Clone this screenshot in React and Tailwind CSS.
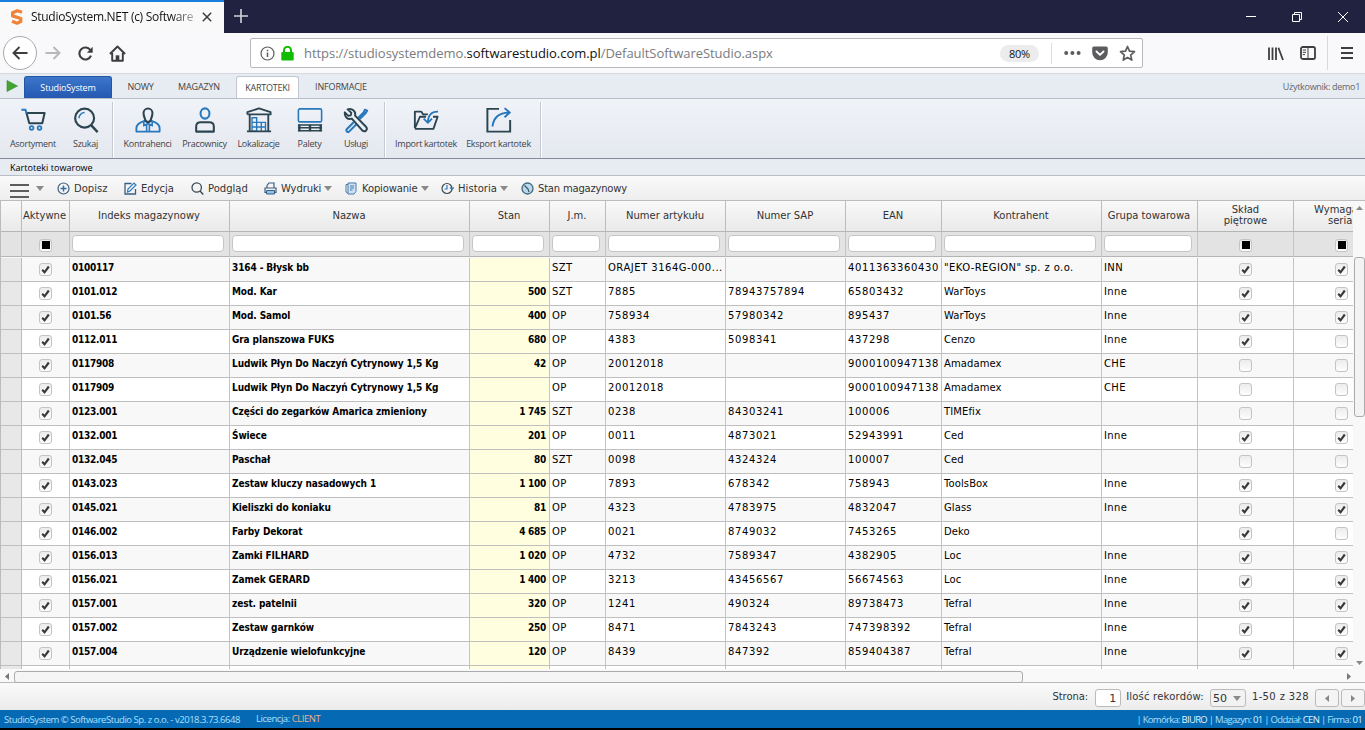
import React from 'react'
import clsx from 'clsx'

const COLUMNS = [
  { key: 'active', label: 'Aktywne', width: 'w-[48px]', type: 'check' },
  { key: 'index', label: 'Indeks magazynowy', width: 'w-[160px]', input: 'w-[152px]', type: 'bold' },
  { key: 'name', label: 'Nazwa', width: 'w-[240px]', input: 'w-[232px]', type: 'bold' },
  { key: 'stock', label: 'Stan', width: 'w-[80px]', input: 'w-[72px]', type: 'stock' },
  { key: 'unit', label: 'J.m.', width: 'w-[56px]', input: 'w-[48px]' },
  { key: 'article', label: 'Numer artykułu', width: 'w-[120px]', input: 'w-[112px]' },
  { key: 'sap', label: 'Numer SAP', width: 'w-[120px]', input: 'w-[112px]' },
  { key: 'ean', label: 'EAN', width: 'w-[96px]', input: 'w-[88px]' },
  { key: 'contractor', label: 'Kontrahent', width: 'w-[160px]', input: 'w-[152px]' },
  { key: 'group', label: 'Grupa towarowa', width: 'w-[96px]', input: 'w-[88px]' },
  { key: 'stacked', label: 'Skład piętrowe', width: 'w-[96px]', type: 'check' },
  { key: 'serial', label: 'Wymaga seria', width: 'w-[96px]', type: 'check' },
]

const ROWS = [
  ['0100117', '3164 - Błysk bb', '', 'SZT', 'ORAJET 3164G-000...', '', '4011363360430', '"EKO-REGION" sp. z o.o.', 'INN', 1, 1],
  ['0101.012', 'Mod. Kar', '500', 'SZT', '7885', '78943757894', '65803432', 'WarToys', 'Inne', 1, 1],
  ['0101.56', 'Mod. Samol', '400', 'OP', '758934', '57980342', '895437', 'WarToys', 'Inne', 1, 1],
  ['0112.011', 'Gra planszowa FUKS', '680', 'OP', '4383', '5098341', '437298', 'Cenzo', 'Inne', 1, 0],
  ['0117908', 'Ludwik Płyn Do Naczyń Cytrynowy 1,5 Kg', '42', 'OP', '20012018', '', '9000100947138', 'Amadamex', 'CHE', 0, 0],
  ['0117909', 'Ludwik Płyn Do Naczyń Cytrynowy 1,5 Kg', '', 'OP', '20012018', '', '9000100947138', 'Amadamex', 'CHE', 0, 0],
  ['0123.001', 'Części do zegarków Amarica zmieniony', '1 745', 'SZT', '0238', '84303241', '100006', 'TIMEfix', '', 0, 0],
  ['0132.001', 'Świece', '201', 'OP', '0011', '4873021', '52943991', 'Ced', 'Inne', 1, 1],
  ['0132.045', 'Paschał', '80', 'SZT', '0098', '4324324', '100007', 'Ced', '', 0, 0],
  ['0143.023', 'Zestaw kluczy nasadowych 1', '1 100', 'OP', '7893', '678342', '758943', 'ToolsBox', 'Inne', 1, 1],
  ['0145.021', 'Kieliszki do koniaku', '81', 'OP', '4323', '4783975', '4832047', 'Glass', 'Inne', 1, 1],
  ['0146.002', 'Farby Dekorat', '4 685', 'OP', '0021', '8749032', '7453265', 'Deko', '', 1, 0],
  ['0156.013', 'Zamki FILHARD', '1 020', 'OP', '4732', '7589347', '4382905', 'Loc', 'Inne', 1, 1],
  ['0156.021', 'Zamek GERARD', '1 400', 'OP', '3213', '43456567', '56674563', 'Loc', 'Inne', 1, 1],
  ['0157.001', 'zest. patelnii', '320', 'OP', '1241', '490324', '89738473', 'Tefral', 'Inne', 1, 1],
  ['0157.002', 'Zestaw garnków', '250', 'OP', '8471', '7843243', '747398392', 'Tefral', 'Inne', 1, 1],
  ['0157.004', 'Urządzenie wielofunkcyjne', '120', 'OP', '8439', '847392', '859404387', 'Tefral', 'Inne', 1, 1],
].map((r) => [1, ...r])

const DARK = '#2b4450'
const BLUE = '#2878bd'

function Svg({ className, box = '0 0 16 16', children }) {
  return (
    <svg viewBox={box} className={clsx('shrink-0', className)} fill="none">
      {children}
    </svg>
  )
}

function Caret({ className }) {
  return (
    <Svg className={clsx('h-[5px] w-[8px]', className)} box="0 0 8 5">
      <path d="M0 0h8L4 5z" fill="#8a8a8a" />
    </Svg>
  )
}

/* browser chrome */

function TitleBar() {
  return (
    <div className="flex h-[33px] bg-[#20223f] text-white">
      <div className="flex w-[224px] items-center border-t-2 border-[#1a7fdc] bg-[#f9f9fa] pb-[2px] pl-[10px]">
        <Svg className="mr-[7px] h-[16px] w-[14px]" box="0 0 14 16">
          <path d="M12 3.2 7.4 1.7 2.6 3.8v3.1l8.2 2.6v3L7 14.2l-5-1.9" stroke="#f08337" strokeWidth="3.2" strokeLinejoin="round" />
        </Svg>
        <span className="w-[164px] overflow-hidden bg-gradient-to-r from-[#111] from-85% to-[#bbb] bg-clip-text text-[12px] leading-[20px] tracking-[-0.29px] whitespace-nowrap text-transparent">
          StudioSystem.NET (c) Software
        </span>
        <Svg className="ml-[7px] h-[10px] w-[10px]" box="0 0 10 10">
          <path d="m.8.8 8.4 8.4M9.2.8.8 9.2" stroke="#3d3d3f" strokeWidth="1.5" />
        </Svg>
      </div>
      <Svg className="mt-[9px] ml-[10px] h-[14px] w-[14px]" box="0 0 14 14">
        <path d="M7 0v14M0 7h14" stroke="#d4d4dc" strokeWidth="1.6" />
      </Svg>
      <div className="ml-auto flex items-center gap-[36px] pr-[17px]">
        <Svg className="h-[10px] w-[10px]" box="0 0 10 10">
          <path d="M0 4.5h10" stroke="#fff" />
        </Svg>
        <Svg className="h-[10px] w-[10px]" box="0 0 10 10">
          <path d="M.5 2.5h7v7h-7zM2.5 2.5v-2h7v7h-2" stroke="#fff" />
        </Svg>
        <Svg className="h-[10px] w-[10px]" box="0 0 10 10">
          <path d="m0 0 10 10M10 0 0 10" stroke="#fff" />
        </Svg>
      </div>
    </div>
  )
}

function AddressBar() {
  return (
    <div className="flex h-[30px] w-[893px] items-center rounded-[2px] border border-[#b9b9bb] bg-white pl-[9px]">
      <Svg className="h-[15px] w-[15px]" box="0 0 15 15">
        <circle cx="7.5" cy="7.5" r="6.5" stroke="#5e5e60" strokeWidth="1.2" />
        <path d="M7.5 6.5V11M7.5 3.8v1.5" stroke="#5e5e60" strokeWidth="1.5" />
      </Svg>
      <Svg className="mr-[10px] ml-[6px] h-[15px] w-[13px]" box="0 0 13 15">
        <rect x=".3" y="6" width="12.4" height="8.6" rx="1.3" fill="#12bc00" />
        <path d="M3 7V4.3a3.5 3.5 0 0 1 7 0V7" stroke="#12bc00" strokeWidth="2" />
      </Svg>
      <span className="mt-px text-[13px] tracking-[-0.04px] whitespace-nowrap text-[#7b7b7d]">
        https://studiosystemdemo.<span className="text-[#111]">softwarestudio.com.pl</span>/DefaultSoftwareStudio.aspx
      </span>
      <div className="ml-auto flex h-full items-center pr-[6px]">
        <span className="mt-px h-[17px] w-[39px] rounded-full bg-[#ececee] text-center text-[11px] leading-[17px] tracking-[-0.3px] text-[#111]">80%</span>
        <span className="ml-[12px] h-[21px] w-px bg-[#dededf]" />
        <Svg className="ml-[12px] h-[4px] w-[17px]" box="0 0 17 4">
          <circle cx="2.2" cy="2" r="2" fill="#5c5c5f" />
          <circle cx="8.4" cy="2" r="2" fill="#5c5c5f" />
          <circle cx="14.6" cy="2" r="2" fill="#5c5c5f" />
        </Svg>
        <Svg className="ml-[11px] h-[15px] w-[16px]" box="0 0 16 15">
          <path d="M1.8.6h12.4q1.600 0 1.600 1.600V6.500a7.800 7.800 0 0 1-15.600 0V2.200Q.2.6 1.800.6z" fill="#5c5c5f" />
          <path d="m4.5 5.500 3.500 3.400 3.500-3.400" stroke="#fff" strokeWidth="1.9" strokeLinecap="round" strokeLinejoin="round" />
        </Svg>
        <Svg className="ml-[11px] h-[17px] w-[17px]" box="0 0 17 17">
          <path d="m8.5 1.500 2 4.700 5 .5-3.800 3.400 1.100 5-4.300-2.600-4.300 2.600 1.100-5L1.500 6.700l5-.5z" stroke="#5c5c5f" strokeWidth="1.700" strokeLinejoin="round" />
        </Svg>
      </div>
    </div>
  )
}

function NavBar() {
  return (
    <div className="flex h-[41px] items-center border-b border-[#d5d8df] bg-[#f9f9fb] pl-[3px]">
      <div className="flex h-[34px] w-[34px] items-center justify-center rounded-full border border-[#a9a9ab] bg-white">
        <Svg className="h-[14px] w-[16px]" box="0 0 16 14">
          <path d="M15.5 7H1.500M7.500 1l-6 6 6 6" stroke="#3e3e40" strokeWidth="1.9" />
        </Svg>
      </div>
      <Svg className="ml-[8px] h-[14px] w-[16px]" box="0 0 16 14">
        <path d="M.5 7h14M8.500 1l6 6-6 6" stroke="#b8b8ba" strokeWidth="1.9" />
      </Svg>
      <Svg className="ml-[17px] h-[15px] w-[15px]" box="0 0 15 15">
        <path d="M12.5 4.300A6 6 0 1 0 13 9.700" stroke="#3e3e40" strokeWidth="2.1" />
        <path d="M14.7.8v6H8.900z" fill="#3e3e40" />
      </Svg>
      <Svg className="ml-[16px] h-[17px] w-[17px]" box="0 0 17 17">
        <path d="m.9 9 7.600-7.500L16.100 9M3.200 8v7.800h10.600V8" stroke="#3e3e40" strokeWidth="1.9" strokeLinejoin="round" />
        <path d="M6.7 15.500v-5.200h3.600v5.200z" fill="#3e3e40" />
      </Svg>
      <div className="ml-[124px]">
        <AddressBar />
      </div>
      <div className="ml-auto flex items-center pr-[12px]">
        <Svg className="h-[15px] w-[16px]" box="0 0 16 15">
          <path d="M1 1.500V14M4.500 1.500V14M8 1.500V14M10.400 1.800 15 14" stroke="#3e3e40" strokeWidth="1.8" />
        </Svg>
        <Svg className="ml-[16px] h-[14px] w-[16px]" box="0 0 16 14">
          <rect x="1" y="1" width="14" height="12" rx="1.8" stroke="#3e3e40" strokeWidth="1.8" />
          <path d="M8 1v12M2.800 4h3.200M2.800 6.300h3.200M2.800 8.600h2.200" stroke="#3e3e40" />
        </Svg>
        <span className="ml-[11px] h-[34px] w-px bg-[#d8d8da]" />
        <Svg className="ml-[13px] h-[14px] w-[12px]" box="0 0 12 14">
          <path d="M0 2h12M0 7h12M0 12h12" stroke="#3e3e40" strokeWidth="1.8" />
        </Svg>
      </div>
    </div>
  )
}

/* ribbon */

function RibbonTabs() {
  return (
    <div className="flex h-[24px] items-end bg-[#e7ebf2] text-[9px] tracking-[-0.25px] text-[#444]">
      <Svg className="mb-[6px] ml-[6px] h-[12px] w-[12px]" box="0 0 12 12">
        <path d="M1 .5 11.500 6 1 11.500z" fill="#42a52f" stroke="#2f8a2a" strokeWidth=".6" />
      </Svg>
      <div className="ml-[6px] h-[22px] w-[88px] rounded-t-[3px] border border-b-0 border-[#2556a2] bg-gradient-to-b from-[#3d76cb] to-[#2459b2] text-center leading-[22px] tracking-[-0.16px] text-white">
        StudioSystem
      </div>
      <span className="w-[57px] text-center leading-[22px]">NOWY</span>
      <span className="w-[60px] text-center leading-[22px] tracking-[-0.15px]">MAGAZYN</span>
      <div className="ml-[7px] h-[22px] w-[63px] rounded-t-[3px] border border-b-0 border-[#c2c6d0] bg-white text-center leading-[21px]">KARTOTEKI</div>
      <span className="w-[84px] text-center leading-[22px] tracking-[-0.15px]">INFORMACJE</span>
      <span className="mr-[5px] ml-auto leading-[23px] tracking-[-0.3px] text-[#666]">Użytkownik: demo1</span>
    </div>
  )
}

function RibbonButton({ label, width, children }) {
  return (
    <div className={clsx('flex flex-col items-center', width)}>
      <Svg className="mb-[2px] h-[26px] w-[26px]" box="0 0 28 28">
        {children}
      </Svg>
      <span className="mt-[3px] text-[9px] leading-[12px] tracking-[-0.28px] whitespace-nowrap text-[#3f4247]">{label}</span>
    </div>
  )
}

function RibbonDivider({ className }) {
  return <span className={clsx('-mt-[5px] h-[56px] w-[2px] border-l border-[#c6cad3] bg-white', className)} />
}

function Ribbon() {
  return (
    <div className="flex h-[61px] border-t border-b border-t-[#b9bdc8] border-b-[#858b99] bg-gradient-to-b from-[#f0f3f8] to-[#e4e8ef] pt-[8px]">
      <RibbonButton label="Asortyment" width="w-[66px]">
        <path d="M7 6.500h19.500L24 17.500H10z" stroke={DARK} strokeWidth="2.2" strokeLinejoin="round" />
        <path d="M1.500 3h4.300l1.500 4" stroke={BLUE} strokeWidth="2.2" />
        <circle cx="12.5" cy="22.500" r="2" stroke={BLUE} strokeWidth="1.9" />
        <circle cx="21" cy="22.500" r="2" stroke={BLUE} strokeWidth="1.9" />
      </RibbonButton>
      <RibbonButton label="Szukaj" width="w-[39px]">
        <circle cx="12.5" cy="12" r="10.200" stroke={DARK} strokeWidth="2.3" />
        <path d="m19.5 19.500 7 7.500" stroke={DARK} strokeWidth="2.6" />
        <path d="M6.5 12a6 6 0 0 1 6-6" stroke={BLUE} strokeWidth="1.6" />
      </RibbonButton>
      <RibbonDivider className="ml-[7px]" />
      <RibbonButton label="Kontrahenci" width="ml-[3px] w-[61px]">
        <path d="M1.500 26.500v-3.500q0-5.500 9-8l3.500 2 3.500-2q9 2.500 9 8v3.500z" stroke={BLUE} strokeWidth="2" strokeLinejoin="round" />
        <path d="m9.5 14.500v5.500l4.500-2 4.500 2v-5.500M12.500 19v7M15.500 19v7" stroke={BLUE} strokeWidth="1.7" />
        <path d="M9.2 6.500a4.800 4.800 0 0 1 9.600 0c0 4-1.800 6-2 8L14 16.500l-2.800-2c-.2-2-2-4-2-8z" stroke={DARK} strokeWidth="2.2" />
      </RibbonButton>
      <RibbonButton label="Pracownicy" width="w-[53px]">
        <ellipse cx="14" cy="7" rx="4.8" ry="5.500" stroke={BLUE} strokeWidth="2.2" />
        <path d="M4.500 26.500V21q0-4.500 5-4.500h9q5 0 5 4.500v5.500z" stroke={DARK} strokeWidth="2.2" strokeLinejoin="round" />
      </RibbonButton>
      <RibbonButton label="Lokalizacje" width="w-[55px]">
        <path d="M6.500 11.500h5V26h-5zM6.500 16.500h15M6.500 21.500h15M16.500 16.500V26M21 16.500V26" stroke={BLUE} strokeWidth="1.5" />
        <path d="M1.500 8V5.500L14 1.500l12.500 4V8H1.500M4 8v18M24 8v18M1 26.300h26" stroke={DARK} strokeWidth="2" strokeLinejoin="round" />
      </RibbonButton>
      <RibbonButton label="Palety" width="w-[47px]">
        <rect x="1.500" y="2" width="25" height="14" rx="1.500" stroke={BLUE} strokeWidth="1.7" />
        <path d="M1 19.300h26M1 22.300h26M1 25.700h26" stroke={DARK} strokeWidth="1.6" />
        <path d="M2.500 19v7M14 19v7M25.500 19v7" stroke={DARK} strokeWidth="2.5" />
      </RibbonButton>
      <RibbonButton label="Usługi" width="w-[46px]">
        <path d="m16 12 6.500-6.500 1-2.500L26 4l-1.500 2.500L18 13M11.500 16.500 4 24a1.800 1.800 0 0 0 2.500 2.500l8-8" stroke={BLUE} strokeWidth="2.2" strokeLinejoin="round" />
        <path d="M5 2.500 9 6.300 8.300 9l-2.600.5L2 5.800C1.300 10.500 5 14 9.500 12.500L20.500 25c3.200 3 7-1 4-4L13 9.300C14 4.500 9.800.8 5 2.500z" stroke={DARK} strokeWidth="2.1" strokeLinejoin="round" />
      </RibbonButton>
      <RibbonDivider className="ml-[5px]" />
      <RibbonButton label="Import kartotek" width="ml-[3px] w-[74px]">
        <path d="M2 23V5h7l2 3h5M2 23.500h20l4.500-13h-5M2 23l5.500-12.500H14" stroke={DARK} strokeWidth="2" strokeLinejoin="round" />
        <path d="M27 5q-10.500-.5-11 11.500M11.500 12.500l4.500 4.500 4.500-4.500" stroke={BLUE} strokeWidth="2" />
      </RibbonButton>
      <RibbonButton label="Eksport kartotek" width="w-[71px]">
        <path d="M14 2H1.500v24.500H26V14" stroke={DARK} strokeWidth="2.1" />
        <path d="M7 21C8 12 13 6.500 24.500 6M20 1.200l5.500 4.800-5.500 5" stroke={BLUE} strokeWidth="2.1" />
      </RibbonButton>
      <RibbonDivider className="ml-[6px]" />
    </div>
  )
}

/* grid */

function ToolButton({ label, caret, className, children }) {
  return (
    <div className={clsx('flex items-center', className)}>
      <Svg className="h-[13px] w-[13px]" box="0 0 13 13">
        {children}
      </Svg>
      <span className="ml-[4px] whitespace-nowrap">{label}</span>
      {caret && <Caret className="ml-[3px]" />}
    </div>
  )
}

function Toolbar() {
  return (
    <div className="flex h-[24px] items-center bg-gradient-to-b from-[#fafafa] to-[#eeeeee] pl-[10px] font-['DejaVu_Sans'] text-[10px] text-[#333]">
      <Svg className="mt-[6px] h-[14px] w-[19px]" box="0 0 19 14">
        <path d="M0 1h19M0 7h19M0 13h19" stroke="#5c5c5c" strokeWidth="2" />
      </Svg>
      <Caret className="ml-[7px]" />
      <ToolButton label="Dopisz" className="ml-[13px] w-[67px]">
        <circle cx="6.5" cy="6.500" r="5.500" stroke="#3b5f80" strokeWidth="1.2" />
        <path d="M6.5 3.500v6M3.500 6.500h6" stroke="#2e6da4" strokeWidth="1.4" />
      </ToolButton>
      <ToolButton label="Edycja" className="w-[67px]">
        <path d="M7.5 1.500H1v10.500h10.500V7" stroke="#3b5f80" strokeWidth="1.3" />
        <path d="m3.5 10 .5-3L10 1l2 2-6 6z" stroke="#2e7bbd" strokeWidth="1.2" />
      </ToolButton>
      <ToolButton label="Podgląd" className="w-[73px]">
        <circle cx="5.7" cy="5.500" r="4.700" stroke="#3a4b58" strokeWidth="1.3" />
        <path d="m9 9 3.300 3.500" stroke="#3a4b58" strokeWidth="1.5" />
      </ToolButton>
      <ToolButton label="Wydruki" caret className="w-[81px] tracking-[-0.1px]">
        <path d="M3 6V3.500L5 1h5v5M1 6h11v4.500H1z" stroke="#3b5f80" strokeWidth="1.2" />
        <path d="M2.500 8.500h8V12h-8z" fill="#8cc4ec" stroke="#3b5f80" />
      </ToolButton>
      <ToolButton label="Kopiowanie" caret className="w-[96px] tracking-[-0.15px]">
        <path d="M3 1h8v8.500L9 12H3z" fill="#cfe3f5" stroke="#4b7ba8" />
        <path d="M3 2.500H1V10l2 1.500M5 4h4M5 6h4M5 8h2.500" stroke="#4b7ba8" />
      </ToolButton>
      <ToolButton label="Historia" caret className="w-[80px] tracking-[0.05px]">
        <circle cx="6" cy="6.500" r="5" stroke="#3a4b58" strokeWidth="1.2" />
        <path d="M6 3v4H3.500M9 5.500l2 2 2-2" stroke="#2e7bbd" strokeWidth="1.2" />
      </ToolButton>
      <ToolButton label="Stan magazynowy" className="tracking-[-0.2px]">
        <circle cx="6.5" cy="6.500" r="5.500" fill="#b8d9ee" stroke="#44657c" strokeWidth="1.3" />
        <path d="m3.5 3.500 3.500 3.500 1 3" stroke="#355" strokeWidth="1.2" />
      </ToolButton>
    </div>
  )
}

function CheckBox({ state }) {
  return (
    <span className="flex h-[13px] w-[13px] items-center justify-center rounded-[3px] border border-[#c4c4c4] bg-gradient-to-b from-[#ececec] to-[#fdfdfd]">
      {state === 'mixed' && <span className="h-[8px] w-[8px] bg-black" />}
      {state === 1 && (
        <Svg className="h-[9px] w-[9px]" box="0 0 9 9">
          <path d="m1.2 4.800 2.300 2.500L7.800 1.500" stroke="#3a3a3a" strokeWidth="2.1" />
        </Svg>
      )}
    </span>
  )
}

function HeaderLabel({ column }) {
  if (column.key === 'serial') {
    const [first, second] = column.label.split(' ')
    return (
      <span className="mb-[2px] flex w-full flex-col pl-[20px] text-left">
        <span>{first}</span>
        <span className="pl-[14px]">{second}</span>
      </span>
    )
  }
  if (column.key === 'stacked') return <span className="mb-[2px] w-[47px]">{column.label}</span>
  return <span className={clsx('mr-px mb-px', column.key === 'active' && '-ml-px')}>{column.label}</span>
}

function HeaderRow() {
  return (
    <div className="flex h-[31px] w-max border-b border-[#b5b5b5] bg-gradient-to-b from-[#f9f9f9] to-[#e9e9e9]">
      <span className="w-[21px] border-r border-[#bcbcbc]" />
      {COLUMNS.map((c) => (
        <div key={c.key} className={clsx('flex shrink-0 items-center justify-center border-r border-[#bcbcbc] text-center leading-[11px]', c.width)}>
          <HeaderLabel column={c} />
        </div>
      ))}
    </div>
  )
}

function FilterRow() {
  return (
    <div className="flex h-[25px] w-max border-b border-[#b5b5b5] bg-[#e3e3e3]">
      <span className="w-[21px] border-r border-[#bcbcbc]" />
      {COLUMNS.map((c) => (
        <div key={c.key} className={clsx('flex shrink-0 items-center border-r border-[#c4c4c4]', c.width)}>
          {c.type === 'check' ? (
            <span className="mx-auto mt-[2px]"><CheckBox state="mixed" /></span>
          ) : (
            <span className={clsx('mb-[2px] ml-[2px] h-[17px] rounded-[4px] border border-[#c6c6c6] bg-white', c.input)} />
          )}
        </div>
      ))}
    </div>
  )
}

function cellTracking(column, value = '') {
  if (column.key === 'name') return 'tracking-[-0.1px]'
  if (column.type) return 'tracking-[-0.26px]'
  if (/^\d/.test(value)) return 'tracking-[0.64px]'
  if (value.includes(' ')) return column.key === 'article' ? 'tracking-[0.5px]' : 'tracking-[0.4px]'
  return column.key === 'contractor' ? 'tracking-[0.1px]' : 'tracking-[0.35px]'
}

function Cell({ column, value }) {
  if (column.type === 'check') {
    return (
      <div className={clsx('flex shrink-0 items-center justify-center border-r border-[#c4c4c4]', column.width)}>
        {value !== undefined && <CheckBox state={value} />}
      </div>
    )
  }
  return (
    <div
      className={clsx(
        'shrink-0 overflow-hidden border-r border-[#c4c4c4] pl-[2px] leading-[20px] whitespace-nowrap text-black',
        column.width,
        column.type && "font-['DejaVu_Sans_Condensed'] font-bold",
        cellTracking(column, value),
        column.type === 'stock' && 'bg-[#ffffdf] pr-[3px] text-right',
      )}
    >
      {value}
    </div>
  )
}

function DataRow({ row, index }) {
  return (
    <div className={clsx('flex w-max border-b border-[#bfbfbf]', index === 0 ? 'h-[25px] pt-px' : 'h-[24px]', index % 2 ? 'bg-white' : 'bg-[#f8f8f8]')}>
      <span className="w-[21px] border-r border-[#bcbcbc] bg-[#e8e8e8]" />
      {COLUMNS.map((c, i) => (
        <Cell key={c.key} column={c} value={row[i]} />
      ))}
    </div>
  )
}

function ItemGrid() {
  return (
    <div className="flex h-[469px] border-t border-l border-[#bcbcbc] font-['DejaVu_Sans'] text-[10px] text-[#333]">
      <div className="w-[1352px] overflow-hidden">
        <HeaderRow />
        <FilterRow />
        {ROWS.map((row, i) => (
          <DataRow key={row[1]} row={row} index={i} />
        ))}
        <DataRow row={[]} index={17} />
      </div>
      <div className="flex w-[12px] flex-col items-center bg-[#f8f8f8]">
        <Svg className="mt-[5px] h-[4px] w-[7px]" box="0 0 7 4">
          <path d="M0 4h7L3.500 0z" fill="#8a8a8a" />
        </Svg>
        <span className="mt-[47px] h-[160px] w-[11px] rounded-[3px] border border-[#ababab] bg-[#f3f3f3]" />
        <Svg className="mt-auto mb-[4px] h-[4px] w-[7px]" box="0 0 7 4">
          <path d="M0 0h7L3.500 4z" fill="#8a8a8a" />
        </Svg>
      </div>
    </div>
  )
}

function HorizontalScroll() {
  return (
    <div className="flex h-[14px] items-center border-b border-[#b9b9b9] bg-[#f9f9f9] pr-[14px] pl-[5px]">
      <Svg className="mt-[2px] h-[7px] w-[4px]" box="0 0 4 7">
        <path d="M4 0v7L0 3.500z" fill="#777" />
      </Svg>
      <span className="mt-[2px] ml-[5px] h-[12px] w-[1009px] rounded-[3px] border border-[#ababab] bg-[#f5f5f5]" />
      <Svg className="mt-[2px] ml-auto h-[7px] w-[4px]" box="0 0 4 7">
        <path d="M0 0v7l4-3.500z" fill="#777" />
      </Svg>
    </div>
  )
}

function Pager() {
  return (
    <div className="flex h-[27px] items-center justify-end bg-gradient-to-b from-[#fafafa] to-[#ececec] font-['DejaVu_Sans'] text-[10px] whitespace-nowrap text-[#333]">
      <span className="tracking-[-0.05px]">Strona:</span>
      <span className="mt-[3px] ml-[7px] h-[18px] w-[26px] rounded-[3px] border border-[#bbb] bg-white pr-[4px] text-right text-[11px] leading-[17px]">1</span>
      <span className="ml-[5px] tracking-[0.2px]">Ilość rekordów:</span>
      <span className="mt-[3px] ml-[6px] flex h-[18px] w-[36px] items-center rounded-[3px] border border-[#bbb] bg-[#f2f2f2] pl-[2px] text-[11px]">
        <span className="mt-[2px]">50</span>
        <Caret className="ml-[6px]" />
      </span>
      <span className="ml-[6px] tracking-[0.37px]">1-50 z 328</span>
      <span className="mt-[3px] ml-[6px] flex h-[18px] w-[24px] items-center justify-center rounded-[3px] border border-[#bbb] bg-[#f4f4f4]">
        <Svg className="h-[7px] w-[4px]" box="0 0 4 7"><path d="M4 0v7L0 3.500z" fill="#888" /></Svg>
      </span>
      <span className="mt-[3px] ml-[2px] flex h-[18px] w-[24px] items-center justify-center rounded-[3px] border border-[#bbb] bg-[#f4f4f4]">
        <Svg className="h-[7px] w-[4px]" box="0 0 4 7"><path d="M0 0v7l4-3.500z" fill="#888" /></Svg>
      </span>
    </div>
  )
}

function StatusBar() {
  return (
    <div className="flex h-[20px] items-center border-b-2 border-black bg-[#0569b4] pr-[3px] pl-[4px] text-[9.5px] whitespace-nowrap text-[#a8e0ff]">
      <span className="mt-[3px] tracking-[-0.46px]">StudioSystem © SoftwareStudio Sp. z o.o. - v2018.3.73.6648</span>
      <span className="mt-px ml-[16px] tracking-[-0.45px]">
        Licencja: <span className="text-[#e8b48c]">CLIENT</span>
      </span>
      <span className="mt-[3px] ml-auto tracking-[-0.7px]">
        | Komórka: <b className="font-normal text-[#dff4ff]">BIURO</b> | Magazyn: <b className="font-normal text-[#dff4ff]">01</b> | Oddział: <b className="font-normal text-[#dff4ff]">CEN</b> | Firma: <b className="font-normal text-[#dff4ff]">01</b>
      </span>
    </div>
  )
}

export default function App() {
  return (
    <div className="h-[730px] w-[1365px] overflow-hidden bg-white font-['Open_Sans',sans-serif]">
      <TitleBar />
      <NavBar />
      <RibbonTabs />
      <Ribbon />
      <div className="h-[17px] border-b border-[#b9bcc4] bg-[#e7ebf2] pl-[10px] text-[9px] leading-[17px] tracking-[0.03px] text-black">Kartoteki towarowe</div>
      <Toolbar />
      <ItemGrid />
      <HorizontalScroll />
      <Pager />
      <StatusBar />
    </div>
  )
}
